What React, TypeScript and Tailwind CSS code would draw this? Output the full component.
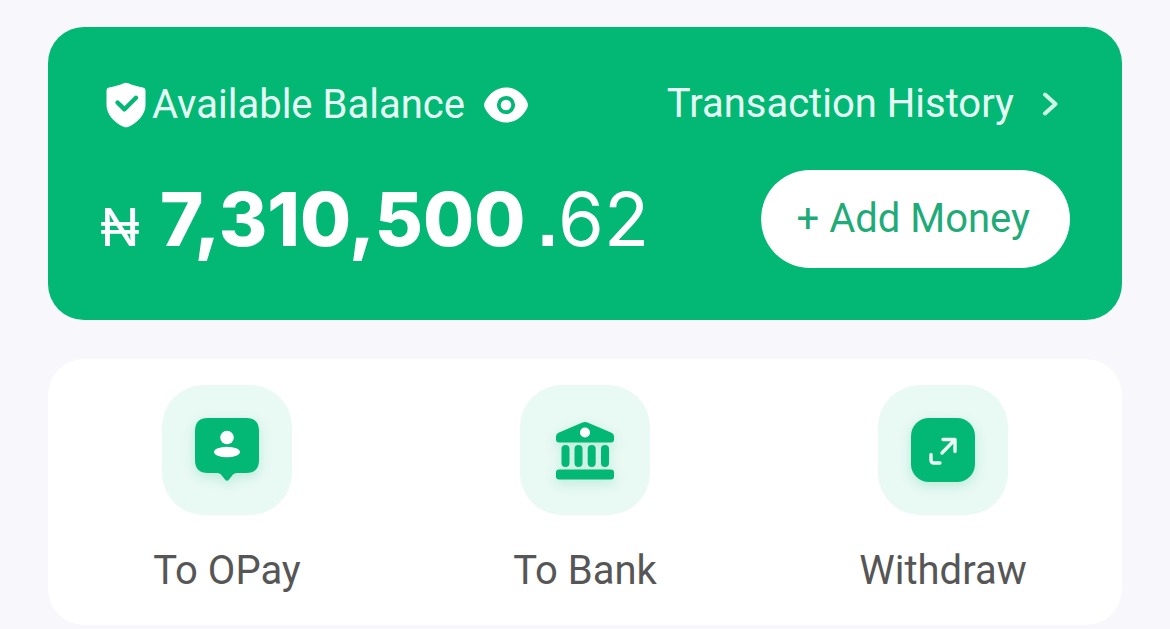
import React from 'react';

function ShieldIcon() {
  return (
    <svg className="h-[46px] w-10 shrink-0" viewBox="0 0 40 46" aria-hidden="true">
      <path
        d="M17.6 1.2Q20 .2 22.400 1.200C27 3.200 32 4.800 37 5.400Q39.500 5.800 39.500 8.200V23C39.500 33 31 41 22.500 44.800Q20 45.800 17.500 44.800C9 41 .5 33 .5 23V8.200Q.5 5.800 3 5.400C8 4.800 13 3.200 17.600 1.200Z"
        fill="#fff"
      />
      <path
        d="M11.500 20.500 18.500 27.300 30 15.800"
        fill="none"
        stroke="#03b775"
        strokeWidth="4.400"
        strokeLinecap="round"
        strokeLinejoin="round"
      />
    </svg>
  );
}

function EyeIcon() {
  return (
    <svg className="h-9 w-11" viewBox="0 0 44 36" aria-hidden="true">
      <path
        d="M22 .5C32 .5 39 7 43 14.500Q44.800 18 43 21.500C39 29 32 35.500 22 35.500S5 29 1 21.500Q-.8 18 1 14.500C5 7 12 .5 22 .5Z"
        fill="#fff"
      />
      <circle cx="22" cy="18" r="7.200" fill="none" stroke="#03b775" strokeWidth="3.800" />
    </svg>
  );
}

function ChevronIcon() {
  return (
    <svg className="h-6 w-4" viewBox="0 0 16 24" aria-hidden="true">
      <path
        d="M3 2.500 13.500 12 3 21.500"
        fill="none"
        stroke="#d0f6e6"
        strokeWidth="4"
        strokeLinecap="round"
        strokeLinejoin="round"
      />
    </svg>
  );
}

function OPayIcon() {
  return (
    <svg className="h-16 w-16 drop-shadow-[0_4px_6px_rgba(4,183,118,0.2)]" viewBox="0 0 64 64" aria-hidden="true">
      <path
        d="M13 0H51Q64 0 64 13V42Q64 55 51 55H41.500Q39.500 55 38 56.500L34 61.500Q32 64 30 61.500L26 56.500Q24.500 55 22.500 55H13Q0 55 0 42V13Q0 0 13 0Z"
        fill="#03b775"
      />
      <circle cx="32" cy="19.500" r="6.800" fill="#fff" />
      <ellipse cx="32" cy="34" rx="13" ry="5.300" fill="#fff" />
    </svg>
  );
}

function BankIcon() {
  return (
    <svg className="h-16 w-16 drop-shadow-[0_4px_6px_rgba(4,183,118,0.2)]" viewBox="0 0 64 64" fill="#03b775" aria-hidden="true">
      <path d="M29.500 4.500Q32 3.300 34.500 4.500L58.500 14.800Q61 16 61 18.500V21.500Q61 24.500 58 24.500H6Q3 24.500 3 21.500V18.500Q3 16 5.500 14.800Z" />
      <circle cx="32" cy="14.500" r="5" fill="#fff" />
      <rect x="8.500" y="27" width="8" height="22" rx="4" />
      <rect x="21.500" y="27" width="8" height="22" rx="4" />
      <rect x="34.700" y="27" width="8" height="22" rx="4" />
      <rect x="48" y="27" width="8" height="22" rx="4" />
      <rect x="3" y="51.500" width="58" height="10" rx="3" />
    </svg>
  );
}

function WithdrawIcon() {
  return (
    <svg className="h-16 w-16 drop-shadow-[0_4px_6px_rgba(4,183,118,0.2)]" viewBox="0 0 64 64" aria-hidden="true">
      <rect width="64" height="64" rx="18" fill="#03b775" />
      <g fill="none" stroke="#e9fbf3" strokeWidth="3.400" strokeLinecap="round" strokeLinejoin="round">
        <path d="M32 21.500H44V33.500" />
        <path d="M43.500 22 31 35" />
        <path d="M20 36.500V42Q20 45 23 45H29" />
      </g>
    </svg>
  );
}

const actions = [
  { label: 'To OPay', icon: <OPayIcon /> },
  { label: 'To Bank', icon: <BankIcon /> },
  { label: 'Withdraw', icon: <WithdrawIcon /> },
];

function BalanceCard() {
  return (
    <section className="rounded-[36px] bg-[#03b775] px-[52px] pt-[51px] pb-[52px] text-[#e6fff5]">
      <div className="flex h-[52px] items-center justify-between">
        <div className="flex items-center pt-[2px] pl-[6px]">
          <ShieldIcon />
          <h1 className="ml-[6px] text-[40px] leading-[52px]">Available Balance</h1>
          <button type="button" aria-label="Hide balance" className="ml-[19px]">
            <EyeIcon />
          </button>
        </div>
        <a href="#history" className="flex items-center gap-7 pr-3 text-[40px] leading-[52px]">
          Transaction History
          <ChevronIcon />
        </a>
      </div>

      <div className="mt-10 flex items-center justify-between">
        <p className="flex items-baseline pt-2 font-['Inter',sans-serif] leading-[80px] text-white">
          <span className="text-[52px]">₦</span>
          <span className="ml-5 text-[74px] font-extrabold">7,310,500</span>
          <span className="ml-3 font-['Liberation_Sans',sans-serif] text-[74px] font-bold">.</span>
          <span className="text-[74px]">62</span>
        </p>
        <button
          type="button"
          className="h-[98px] rounded-full bg-white pr-10 pl-9 text-[40px] leading-[52px] text-[#1fab78]"
        >
          + Add Money
        </button>
      </div>
    </section>
  );
}

function QuickActions() {
  return (
    <nav className="mt-[39px] grid grid-cols-3 rounded-[36px] bg-white pt-[26px] pb-7">
      {actions.map((action) => (
        <a
          key={action.label}
          href="#transfer"
          className="flex flex-col items-center text-[40px] leading-[52px] text-[#565656]"
        >
          <span className="flex h-[130px] w-[130px] items-center justify-center rounded-[42px] bg-[#e9f9f4]">
            {action.icon}
          </span>
          <span className="mt-[30px]">{action.label}</span>
        </a>
      ))}
    </nav>
  );
}

export default function App() {
  return (
    <main className="min-h-screen bg-[#f7f7fc] px-12 pt-[27px] font-['Roboto',sans-serif]">
      <BalanceCard />
      <QuickActions />
    </main>
  );
}
